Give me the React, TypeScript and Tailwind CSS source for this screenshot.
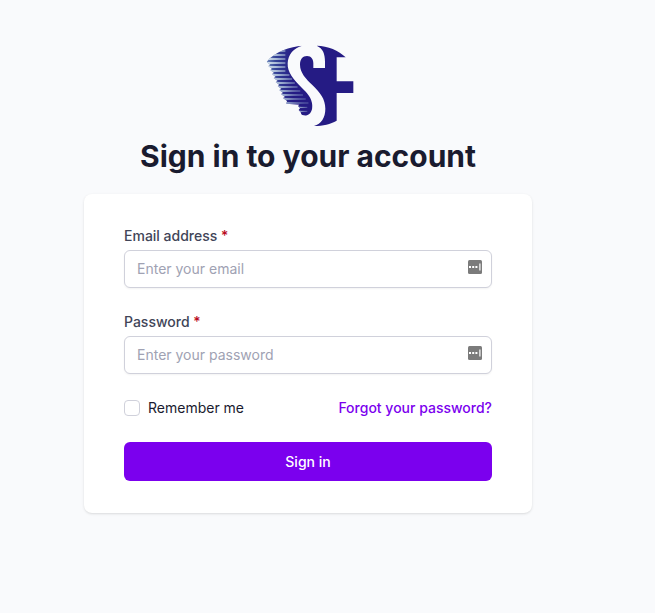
import React from "react";

const stripes = [39, 51, 63, 75, 87, 99, 111, 123, 135, 147, 159, 171, 183, 195];
const lowerStripes = [208, 220];

function Logo() {
  return (
    <svg className="block h-[95px] w-[100px]" viewBox="0 0 300 285" fill="none" aria-label="SF">
      <defs>
        <linearGradient id="fade" gradientUnits="userSpaceOnUse" x1="20" y1="0" x2="135" y2="0">
          <stop offset="0" stopColor="#e4f0f5" />
          <stop offset="0.45" stopColor="#b5cadd" stopOpacity="0.9" />
          <stop offset="1" stopColor="#7e91c0" stopOpacity="0.5" />
        </linearGradient>
        <linearGradient id="body" gradientUnits="userSpaceOnUse" x1="20" y1="0" x2="100" y2="0">
          <stop offset="0" stopColor="#3a55a0" />
          <stop offset="1" stopColor="#251b84" />
        </linearGradient>
        <clipPath id="wing">
          <path d="M127 23C92 26 43 40 20 72L31 81L25 84L36 93L31 96L42 105L36 108L47 117L41 120L53 129L47 132L58 141L53 144L64 153L58 156L69 165L63 168L75 177L69 180L81 189L79 197L118 200L114 204L120 211L116 216L122 223L124 229C128 232 132 233 138 233C152 230 158 216 157 201C155 179 142 166 126 150C100 124 82 104 83 76C84 50 101 29 127 23Z" />
        </clipPath>
      </defs>
      <g clipPath="url(#wing)">
        <rect width="180" height="250" fill="url(#body)" />
        {stripes.map((y) => (
          <path
            key={y}
            d={`M10 ${y - 3.5}L${y > 99 ? 80 + (y - 99) * 0.68 : 76} ${y}L10 ${y + 3.5}Z`}
            fill="url(#fade)"
            stroke="url(#fade)"
            strokeWidth="2"
          />
        ))}
        {lowerStripes.map((y) => (
          <path key={y} d={`M110 ${y - 2}L142 ${y}L110 ${y + 2}Z`} fill="#a9bdd8" stroke="#a9bdd8" strokeOpacity="0.6" />
        ))}
      </g>
      <path
        fill="#251b84"
        d="M170 23C204 24 236 37 257 58H230V130H280V165H230V248C211 258 190 264 162 264C184 257 196 239 196 212C196 183 180 163 157 141C138 123 120 104 120 80C120 63 128 54 141 54C154 54 160 64 160 76V90H195V72C195 47 189 31 170 23Z"
      />
    </svg>
  );
}

function FieldIcon() {
  return (
    <svg className="mb-1 h-[14px] w-[14px] shrink-0" viewBox="0 0 14 14">
      <rect width="14" height="14" rx="1.5" fill="#7b7b7b" />
      <path d="M1 6h2v2H1zM4.2 6h2v2h-2zM7.4 6h2v2h-2zM11.3 3.5h1.2v7h-1.2z" fill="#fff" />
    </svg>
  );
}

function Field({ label, placeholder, type }: { label: string; placeholder: string; type: string }) {
  return (
    <label className="block">
      <span className="block text-sm font-medium text-[#414558]">
        {label} <span className="text-[#b90920]">*</span>
      </span>
      <span className="mt-1 flex h-[38px] items-center rounded-md border border-[#d0d1db] bg-white pr-[9px] pl-3 shadow-xs">
        <input
          type={type}
          placeholder={placeholder}
          className="min-w-0 flex-1 bg-transparent text-sm outline-none placeholder:text-[#a0a2b3]"
        />
        <FieldIcon />
      </span>
    </label>
  );
}

export default function App() {
  return (
    <main className="flex min-h-screen flex-col items-center bg-[#f9fafc] pt-[38px] pr-[39px] font-['Inter',sans-serif] text-[#1a1b2f]">
      <div className="pl-1">
        <Logo />
      </div>
      <h1 className="mt-[5px] text-3xl leading-9 font-bold">Sign in to your account</h1>
      <form
        className="mt-5 flex w-[448px] flex-col gap-6 rounded-lg bg-white px-10 py-8 shadow-sm"
        onSubmit={(e) => e.preventDefault()}
      >
        <Field label="Email address" placeholder="Enter your email" type="email" />
        <Field label="Password" placeholder="Enter your password" type="password" />
        <div className="flex h-5 items-center justify-between text-sm">
          <label className="flex items-center gap-2">
            <input type="checkbox" className="h-4 w-4 appearance-none rounded-sm border border-[#d0d1db] bg-white" />
            Remember me
          </label>
          <a href="#" className="font-medium text-[#7b00ee]">Forgot your password?</a>
        </div>
        <button className="h-[39px] rounded-md bg-[#7b00ee] text-sm font-medium text-white">Sign in</button>
      </form>
    </main>
  );
}
